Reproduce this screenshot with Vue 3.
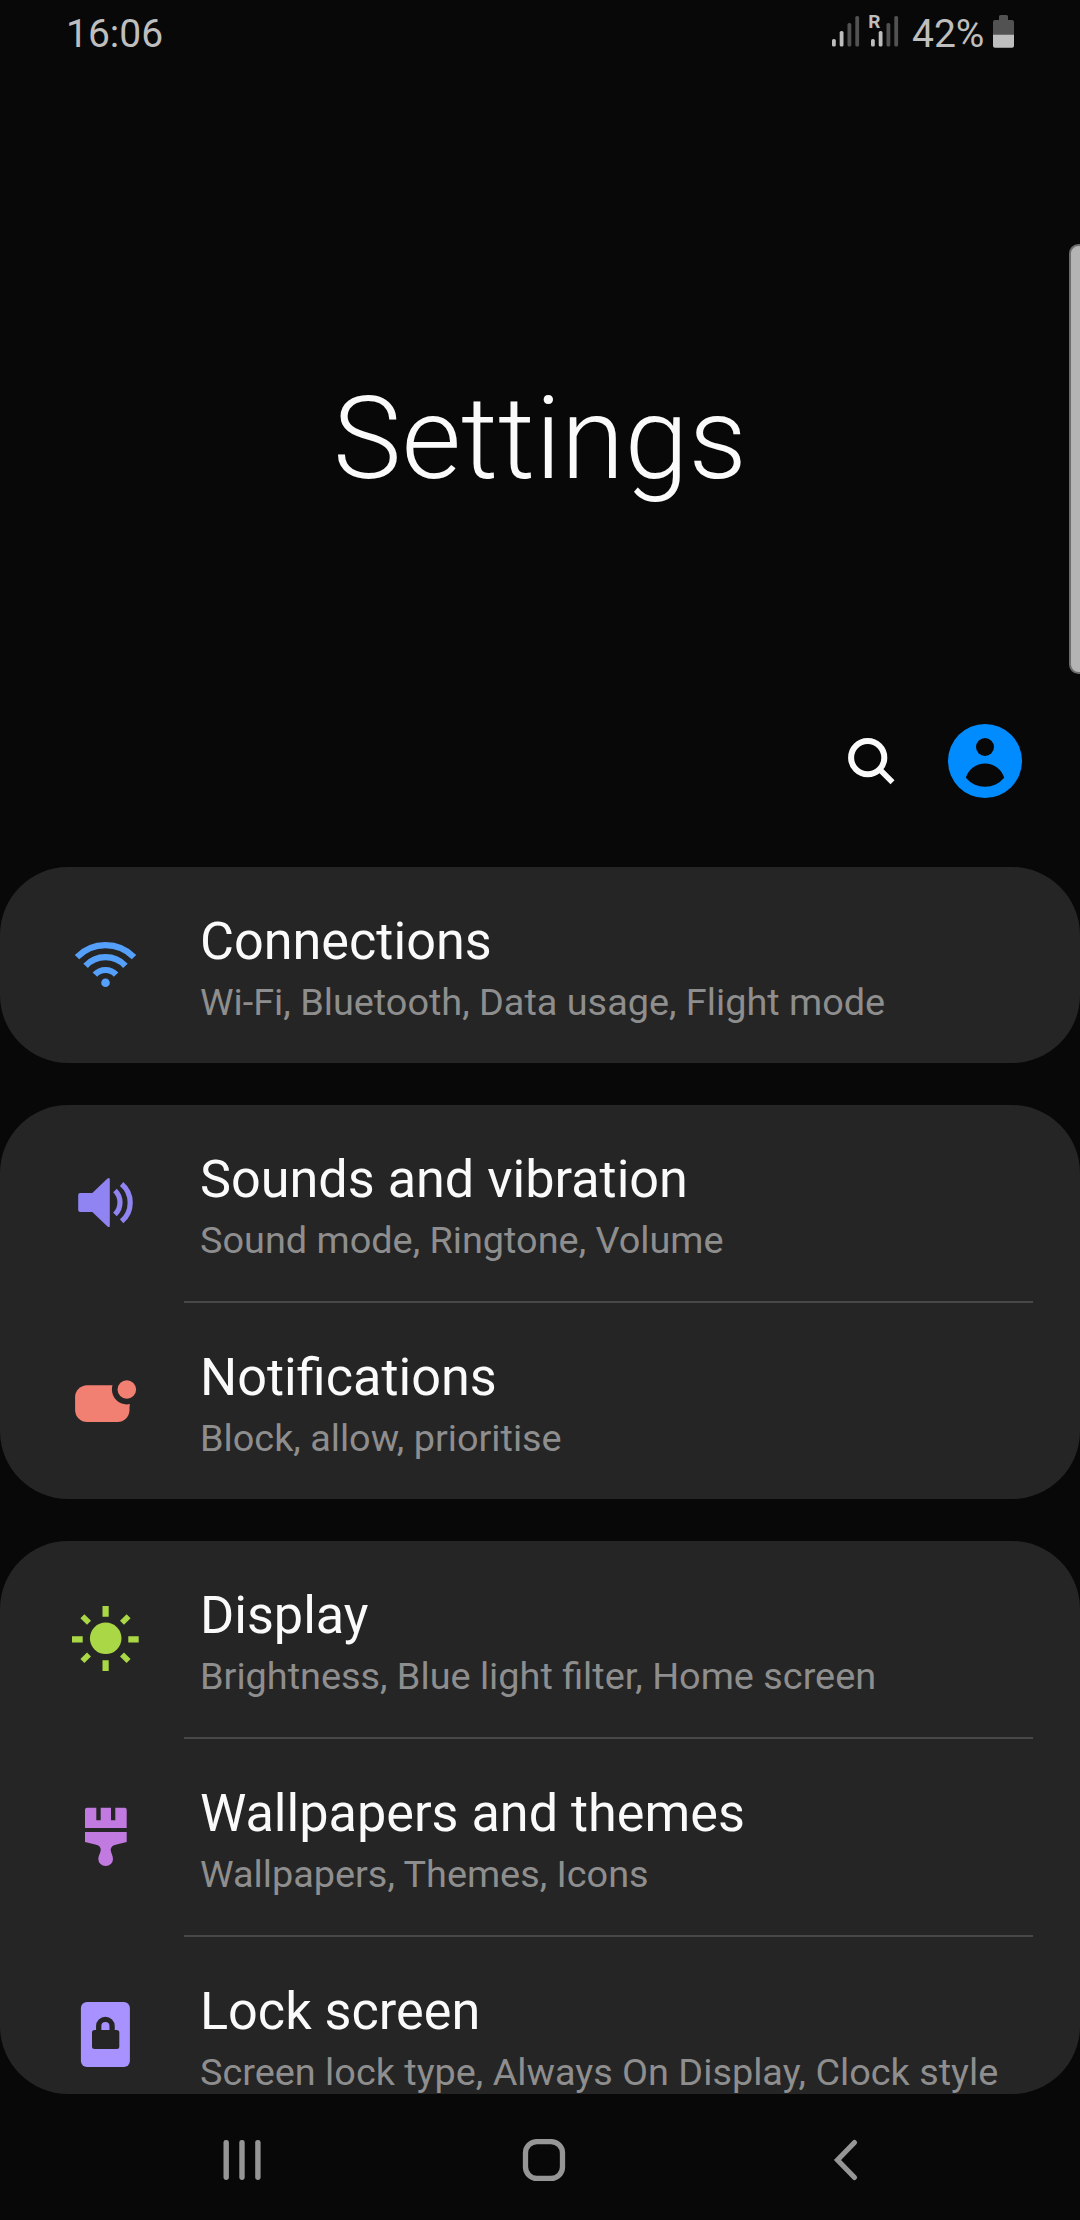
<script setup>
const groups = [
  [{ icon: 'wifi', title: 'Connections', summary: 'Wi-Fi, Bluetooth, Data usage, Flight mode' }],
  [
    { icon: 'sound', title: 'Sounds and vibration', summary: 'Sound mode, Ringtone, Volume' },
    { icon: 'notification', title: 'Notifications', summary: 'Block, allow, prioritise' },
  ],
  [
    { icon: 'display', title: 'Display', summary: 'Brightness, Blue light filter, Home screen' },
    { icon: 'brush', title: 'Wallpapers and themes', summary: 'Wallpapers, Themes, Icons' },
    { icon: 'lock', title: 'Lock screen', summary: 'Screen lock type, Always On Display, Clock style' },
  ],
]
</script>

<template>
  <div class="screen">
    <header class="status">
      <span class="clock">16:06</span>
      <div class="indicators">
        <svg class="signals" width="68" height="40" viewBox="832 10 68 40">
          <g fill="#bebebe">
            <rect x="832" y="39" width="3.8" height="7.6" rx="1.6" />
            <rect x="839.7" y="31" width="3.8" height="15.6" rx="1.6" />
            <rect x="871" y="39" width="3.8" height="7.6" rx="1.6" />
            <rect x="878.7" y="31" width="3.8" height="15.6" rx="1.6" />
          </g>
          <g fill="#525252">
            <rect x="847.5" y="23" width="3.8" height="23.6" rx="1.6" />
            <rect x="855.3" y="16" width="3.8" height="30.6" rx="1.6" />
            <rect x="886.5" y="23" width="3.8" height="23.6" rx="1.6" />
            <rect x="894.3" y="16" width="3.8" height="30.6" rx="1.6" />
          </g>
          <text x="868.3" y="28" class="roaming">R</text>
        </svg>
        <span class="percent">42%</span>
        <svg class="battery" width="21" height="40" viewBox="993 10 21 40">
          <path fill="#525252" d="M993 35V22a2 2 0 0 1 2-2h4v-3.500a1.500 1.500 0 0 1 1.500-1.500h6a1.500 1.500 0 0 1 1.500 1.500V20h4a2 2 0 0 1 2 2v13z" />
          <path fill="#bebebe" d="M993 34.700h21v11a2 2 0 0 1-2 2h-17a2 2 0 0 1-2-2z" />
        </svg>
      </div>
    </header>

    <h1 class="heading">Settings</h1>

    <div class="actions">
      <svg width="50" height="50" viewBox="846 736 50 50" fill="none" stroke="#fafafa">
        <circle cx="867.7" cy="757.7" r="16.6" stroke-width="6" />
        <path d="M879.500 769.300L892.500 782.300" stroke-width="5.600" />
      </svg>
      <svg width="74" height="74" viewBox="948 724 74 74">
        <circle cx="985" cy="761" r="37" fill="#008cff" />
        <circle cx="985" cy="747" r="9" fill="#080808" />
        <path fill="#080808" d="M965.800 777.800A20 20 0 0 1 1004.200 777.800A25 25 0 0 1 965.800 777.800Z" />
      </svg>
    </div>

    <main class="list">
      <section v-for="(group, g) in groups" :key="g" class="card">
        <div v-for="item in group" :key="item.title" class="row">
          <svg class="icon" width="80" height="80" viewBox="0 0 80 80">
            <g v-if="item.icon === 'wifi'" fill="none" stroke="#55a0fa" stroke-width="6.2">
              <path d="M12 32.200A39.800 39.800 0 0 1 69 32.200" />
              <path d="M20.600 40.800A27.300 27.300 0 0 1 60.400 40.800" />
              <path d="M29.900 49.700A14.300 14.300 0 0 1 51.100 49.700" />
              <circle cx="40.500" cy="57.800" r="4.300" fill="#55a0fa" stroke="none" />
            </g>
            <g v-else-if="item.icon === 'sound'">
              <path fill="#9084f2" d="M15.200 30H27.300L42.500 15.600Q44.800 14 44.800 16.500V62.500Q44.800 65 42.500 63.400L27.300 49H15.200a2 2 0 0 1-2-2V32a2 2 0 0 1 2-2z" />
              <path fill="none" stroke="#9084f2" stroke-width="5.200" d="M50 27.500A16.900 16.900 0 0 1 50 51.500M56.600 21A24.500 24.500 0 0 1 56.600 58.300" />
            </g>
            <g v-else-if="item.icon === 'notification'" fill="#f28072">
              <rect x="10.100" y="24.300" width="54.400" height="36.600" rx="12" />
              <path d="M52 24.300H64.500V45H52z" />
              <circle cx="61.800" cy="28.500" r="14.900" fill="#252525" />
              <circle cx="61.800" cy="28.500" r="9.300" />
            </g>
            <g v-else-if="item.icon === 'display'" stroke="#aad746" stroke-width="6.200" fill="none">
              <circle cx="40.700" cy="39.300" r="15.800" fill="#aad746" stroke="none" />
              <path d="M40.600 7V17.700M40.600 61.300V72M7 40.400H17.700M63.300 40.400H73.700" />
              <path stroke-width="5.600" d="M17.400 17.200L24 23.800M63.600 17.200L57 23.800M17.400 62.100L24 55.500M63.600 62.100L57 55.500" />
            </g>
            <g v-else-if="item.icon === 'brush'" fill="#c07ae0">
              <path d="M20 31V12.700a2 2 0 0 1 2-2h9.300V23.300h4.400V10.700H46V23.300h4.300V10.700h9.400a2 2 0 0 1 2 2V31z" />
              <path d="M20 35H61.700V45L51.500 47.400C46.500 48.600 45.200 51 46 54.500C46.500 57 48 59 48 62A7.350 7 0 0 1 33.300 62C33.300 59 34.900 57 35.500 54.500C36.300 51 35.200 48.600 30.200 47.400L20 45z" />
            </g>
            <g v-else>
              <rect x="15.900" y="7" width="49" height="65" rx="6" fill="#a892ff" />
              <rect x="27" y="35" width="27.300" height="19" rx="2.500" fill="#252525" />
              <path d="M33.700 37V31a6.700 6.700 0 0 1 13.400 0V37" fill="none" stroke="#252525" stroke-width="5.300" />
            </g>
          </svg>
          <div class="texts">
            <div class="title">{{ item.title }}</div>
            <div class="summary">{{ item.summary }}</div>
          </div>
        </div>
      </section>
    </main>

    <nav class="nav">
      <svg width="44" height="44" viewBox="-22 -22 44 44">
        <g fill="#969696">
          <rect x="-18.500" y="-20" width="5.400" height="40" rx="2.400" />
          <rect x="-2.700" y="-20" width="5.400" height="40" rx="2.400" />
          <rect x="13.200" y="-20" width="5.400" height="40" rx="2.400" />
        </g>
      </svg>
      <svg width="44" height="44" viewBox="-22 -22 44 44">
        <rect x="-18.500" y="-18.400" width="37" height="36.800" rx="11.500" fill="none" stroke="#969696" stroke-width="5.300" />
      </svg>
      <svg width="44" height="44" viewBox="-22 -22 44 44">
        <path d="M8.500 -17.500L-8.500 0L8.500 17.500" fill="none" stroke="#969696" stroke-width="5.200" stroke-linecap="round" />
      </svg>
    </nav>

    <div class="edge-handle"></div>
  </div>
</template>

<style>
body {
  margin: 0;
  background: #080808;
}
</style>

<style scoped>
.screen {
  position: relative;
  display: flex;
  flex-direction: column;
  width: 1080px;
  height: 2220px;
  overflow: hidden;
  background: #080808;
  color: #fafafa;
  font-family: Roboto, sans-serif;
}
svg {
  display: block;
  flex: none;
}
.status {
  display: flex;
  justify-content: space-between;
  height: 66px;
  padding: 0 66px;
  color: #bebebe;
  font-size: 39px;
  line-height: 68px;
  flex: none;
  box-sizing: border-box;
}
.indicators {
  display: flex;
}
.signals,
.battery {
  margin-top: 10px;
}
.percent {
  width: 81px;
  margin-left: 12px;
}
.roaming {
  fill: #bebebe;
  font: bold 19px Roboto, sans-serif;
}
.heading {
  flex: none;
  margin: 0;
  height: 658px;
  padding-top: 305px;
  box-sizing: border-box;
  font-size: 115.3px;
  font-weight: 300;
  line-height: 136px;
  text-align: center;
}
.actions {
  flex: none;
  display: flex;
  justify-content: flex-end;
  gap: 52px;
  height: 143px;
  padding-right: 58px;
}
.actions svg:first-child {
  margin-top: 12px;
}
.list {
  flex: none;
  display: flex;
  flex-direction: column;
  gap: 42px;
  height: 1227px;
  overflow: hidden;
  border-radius: 0 0 68px 68px;
}
.card {
  flex: none;
  border-radius: 68px;
  background: #252525;
}
.row {
  display: flex;
  height: 196px;
  align-items: center;
}
.row + .row {
  height: 198px;
  background: linear-gradient(#484848, #484848) 184px 0 / 849px 2px no-repeat;
  padding-top: 2px;
  box-sizing: border-box;
}
.icon {
  margin-left: 65px;
}
.texts {
  height: 196px;
  margin-left: 55px;
  padding-top: 45px;
  box-sizing: border-box;
  white-space: nowrap;
}
.title {
  font-size: 52.2px;
  line-height: 60px;
}
.summary {
  font-size: 37.83px;
  line-height: 60px;
  color: #8e8e8e;
}
.nav {
  flex: none;
  display: flex;
  justify-content: center;
  gap: 258px;
  height: 126px;
  padding: 44px 0 0 8px;
  box-sizing: border-box;
}
.edge-handle {
  position: absolute;
  top: 244px;
  right: -8px;
  width: 19px;
  height: 430px;
  box-sizing: border-box;
  border: 2px solid #6c6c6c;
  border-radius: 16px;
  background: #b4b4b4;
}
</style>
